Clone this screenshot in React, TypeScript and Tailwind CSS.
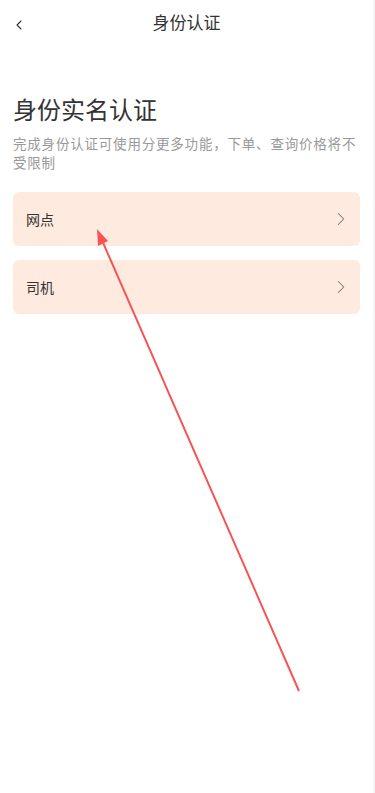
import { ChevronLeft, ChevronRight } from "lucide-react";

const font = "font-['Noto_Sans_CJK_SC','Noto_Sans',sans-serif]";

const items = ["网点", "司机"];

export default function App() {
  return (
    <div className={`relative flex min-h-[793px] w-[375px] bg-white ${font}`}>
      <div className="flex-1">
        {/* header */}
        <header className="relative flex h-[44px] items-center justify-center">
          <ChevronLeft className="absolute left-[11px] top-[17px] h-[16px] w-[16px] text-[#333]" strokeWidth={1.6} />
          <span className="text-[17px] text-[#333]">身份认证</span>
        </header>

        <main className="px-[13px] pt-[48px]">
          <h1 className="text-[24px] leading-[34px] text-[#333]">身份实名认证</h1>
          <p className="mt-[8px] text-[13.5px] leading-[19px] tracking-[0.8px] text-[#999]">
            完成身份认证可使用分更多功能，下单、查询价格将不受限制
          </p>

          <div className="mt-[20px] flex flex-col gap-[14px]">
            {items.map((t) => (
              <div
                key={t}
                className="flex h-[54px] items-center justify-between rounded-[6px] bg-[#FEEADE] pl-[13px] pr-[8px]"
              >
                <span className="text-[14px] text-[#333]">{t}</span>
                <ChevronRight className="h-[22px] w-[22px] text-[#777]" strokeWidth={1.1} />
              </div>
            ))}
          </div>
        </main>
      </div>
      <div className="w-[2px] bg-[#f5f5f5]" />

      {/* annotation arrow */}
      <svg className="pointer-events-none absolute left-0 top-0" width="375" height="793">
        <line x1="299" y1="691" x2="101" y2="238" stroke="#F55555" strokeWidth="2" />
        <polygon points="97,229 98,246 108,241" fill="#F55555" />
      </svg>
    </div>
  );
}
